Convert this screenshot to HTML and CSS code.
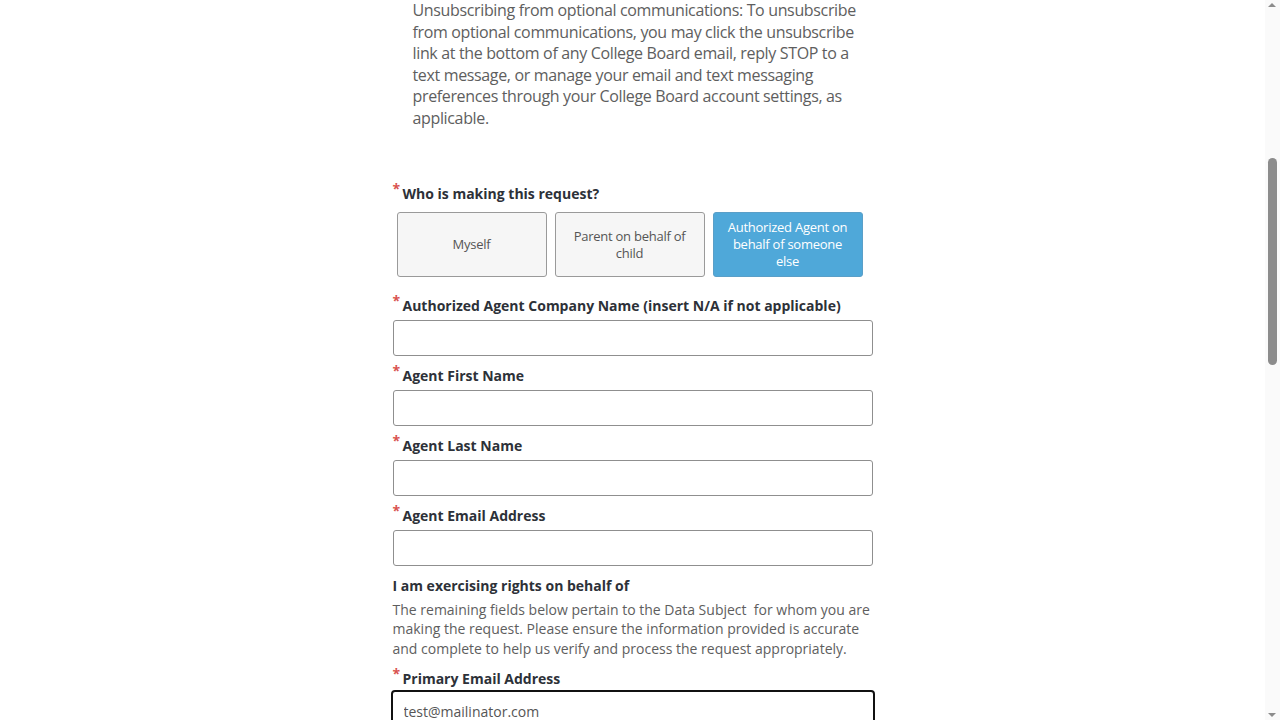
FILE: index.html
```html
<!DOCTYPE html>
<html lang="en">
<head>
<meta charset="utf-8">
<title>Request form</title>
<link rel="stylesheet" href="styles.css">
</head>
<body>
<div class="page">
  <main class="form">
    <p class="notice">Unsubscribing from optional communications: To unsubscribe from optional communications, you may click the unsubscribe link at the bottom of any College Board email, reply STOP to a text message, or manage your email and text messaging preferences through your College Board account settings, as applicable.</p>

    <div class="field field-who">
      <div class="label"><span class="req">*</span>Who is making this request?</div>
      <div class="choices">
        <button class="choice">Myself</button>
        <button class="choice">Parent on behalf of child</button>
        <button class="choice selected">Authorized Agent on behalf of someone else</button>
      </div>
    </div>

    <div class="field">
      <div class="label"><span class="req">*</span>Authorized Agent Company Name (insert N/A if not applicable)</div>
      <input class="input" type="text">
    </div>
    <div class="field">
      <div class="label"><span class="req">*</span>Agent First Name</div>
      <input class="input" type="text">
    </div>
    <div class="field">
      <div class="label"><span class="req">*</span>Agent Last Name</div>
      <input class="input" type="text">
    </div>
    <div class="field">
      <div class="label"><span class="req">*</span>Agent Email Address</div>
      <input class="input" type="text">
    </div>

    <div class="section">
      <div class="label plain">I am exercising rights on behalf of</div>
      <p class="desc">The remaining fields below pertain to the Data Subject &nbsp;for whom you are making the request. Please ensure the information provided is accurate and complete to help us verify and process the request appropriately.</p>
    </div>

    <div class="field">
      <div class="label label-tight"><span class="req">*</span>Primary Email Address</div>
      <input class="input focused" type="text" value="test@mailinator.com">
    </div>
  </main>
</div>
<div class="scrollbar">
  <span class="arrow up"></span>
  <span class="thumb"></span>
  <span class="arrow down"></span>
</div>
</body>
</html>
```

FILE: styles.css
```css
html, body {
  margin: 0;
  padding: 0;
  height: 100%;
  overflow: hidden;
  background: #ffffff;
}
body {
  font-family: "Open Sans", "Liberation Sans", sans-serif;
  color: #2d3138;
}
.page {
  padding-right: 15px;
}
.form {
  width: 480px;
  margin: 0 auto;
}
.notice {
  margin: 0;
  padding: 0 8px 0 20px;
  font-size: 16px;
  line-height: 21.6px;
  letter-spacing: -0.35px;
  color: #5e5e5e;
}
.field-who {
  margin-top: 54px;
}
.field {
  margin-bottom: 10px;
}
.label {
  font-size: 14px;
  font-weight: 700;
  line-height: 20px;
  color: #2d3138;
  margin-bottom: 4px;
}
.label-tight {
  margin-bottom: 1px;
}
.req {
  color: #d9534f;
  font-size: 14px;
  display: inline-block;
  width: 10px;
  vertical-align: 5px;
  line-height: 10px;
  font-weight: 700;
}
.choices {
  display: flex;
  gap: 8px;
  padding-left: 4px;
  margin-top: 8px;
  margin-bottom: 19px;
}
.choice {
  width: 150px;
  height: 65px;
  box-sizing: border-box;
  border: 1px solid #9a9a9a;
  border-radius: 3px;
  background: #f6f6f6;
  color: #555555;
  font-family: "Open Sans", "Liberation Sans", sans-serif;
  font-size: 13px;
  line-height: 17px;
  letter-spacing: -0.25px;
  padding: 1px 8px 0;
  text-align: center;
}
.choice.selected {
  background: #4fa8d9;
  border-color: #5a9fc8;
  color: #ffffff;
}
.input {
  display: block;
  width: 480px;
  height: 36px;
  box-sizing: border-box;
  border: 1px solid #8f8f8f;
  border-radius: 3px;
  padding: 0 10px;
  margin: 0;
  font-family: "Open Sans", "Liberation Sans", sans-serif;
  font-size: 14px;
  color: #555555;
  background: #ffffff;
}
.input.focused {
  border: 2px solid #111111;
  border-radius: 4px;
  width: 484px;
  margin-left: -2px;
  padding: 0 11px;
  height: 40px;
  padding-top: 2px;
}
.section {
  margin-bottom: 11px;
}
.label.plain {
  margin-bottom: 4px;
}
.desc {
  margin: 0;
  font-size: 14px;
  line-height: 19.6px;
  color: #5e5e5e;
}
.scrollbar {
  position: fixed;
  top: 0;
  right: 0;
  width: 15px;
  height: 720px;
  background: #fafafa;
}
.thumb {
  position: absolute;
  left: 3px;
  top: 158px;
  width: 9px;
  height: 207px;
  border-radius: 5px;
  background: #8c8c8c;
}
.arrow {
  position: absolute;
  left: 3px;
  width: 0;
  height: 0;
  border-left: 4.5px solid transparent;
  border-right: 4.5px solid transparent;
}
.arrow.up {
  top: 3px;
  border-bottom: 4px solid #8c8c8c;
}
.arrow.down {
  bottom: 3px;
  border-top: 4px solid #8c8c8c;
}
```
